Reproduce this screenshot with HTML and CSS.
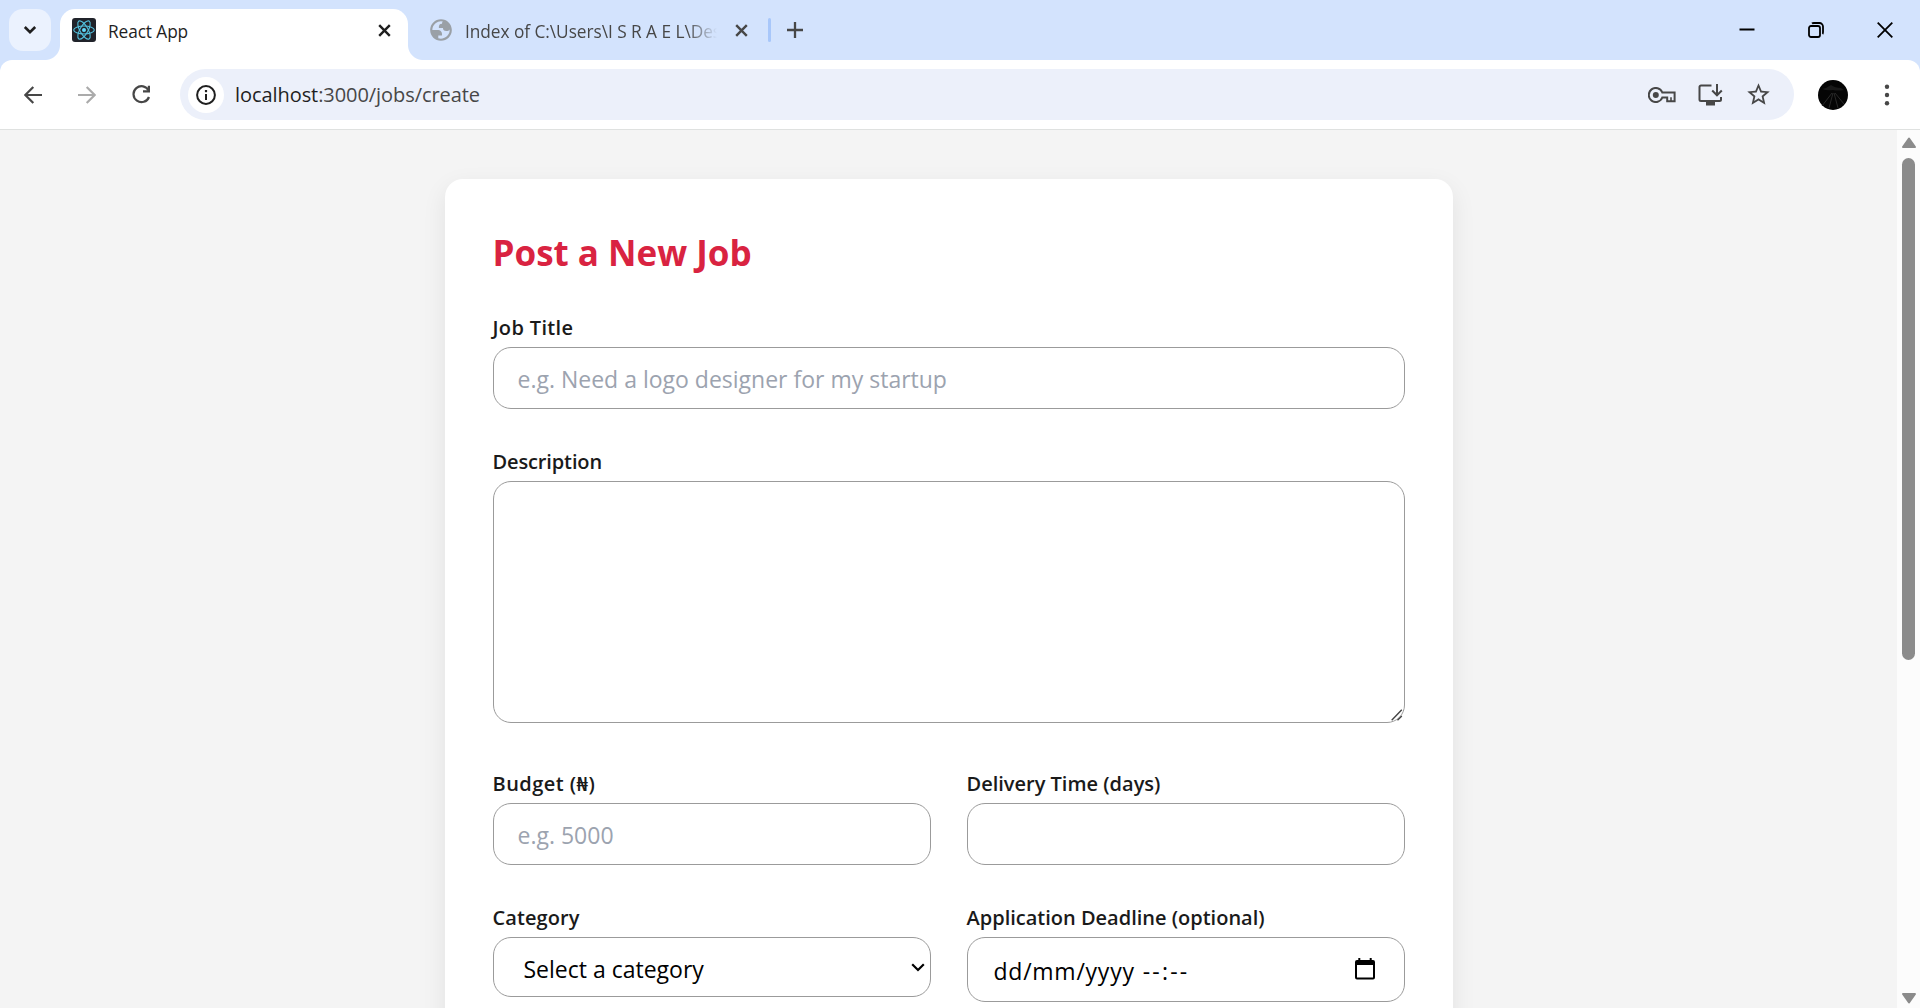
FILE: index.html
```html
<!DOCTYPE html>
<html lang="en">
<head>
<meta charset="utf-8">
<title>React App</title>
<link rel="stylesheet" href="styles.css">
</head>
<body>
<div class="browser">
  <header class="tabstrip">
    <button class="tab-search" aria-label="Search tabs">
      <svg width="14" height="10" viewBox="0 0 14 10"><path d="M1.8 2 7 7.200l5.200-5.200" fill="none" stroke="#1f1f1f" stroke-width="2.600"/></svg>
    </button>
    <div class="tab tab-active">
      <svg class="favicon" width="24" height="24" viewBox="0 0 24 24">
        <rect width="24" height="24" rx="3" fill="#20232a"/>
        <g fill="none" stroke="#53c1de" stroke-width="1.100">
          <ellipse cx="12" cy="12" rx="10.300" ry="4"/>
          <ellipse cx="12" cy="12" rx="10.300" ry="4" transform="rotate(60 12 12)"/>
          <ellipse cx="12" cy="12" rx="10.300" ry="4" transform="rotate(120 12 12)"/>
        </g>
        <circle cx="12" cy="12" r="2" fill="#61dafb"/>
      </svg>
      <span class="tab-title"><span class="t title-react">React App</span></span>
      <svg class="tab-close" width="13" height="13" viewBox="0 0 13 13"><path d="M1.200 1.200l10.600 10.600M11.800 1.200 1.200 11.800" stroke="#1f1f1f" stroke-width="2.400"/></svg>
    </div>
    <div class="tab tab-idle">
      <svg class="globe" width="26" height="26" viewBox="0 0 24 24"><path fill="#9aa0a6" fill-rule="evenodd" d="M12 2C6.480 2 2 6.480 2 12s4.480 10 10 10 10-4.480 10-10S17.520 2 12 2zM4 12h4.400c3.407.022 4.922 1.730 4.543 5.127H9.488v2.470a8.004 8.004 0 0 0 10.498-8.083C19.327 12.504 18.332 13 17 13c-2.137 0-3.206-.916-3.206-2.750h-3.748c-.274-2.728.683-4.092 2.870-4.092 0-.975.327-1.597.811-1.970A8.004 8.004 0 0 0 4 12z"/></svg>
      <span class="tab-title faded"><span class="t title-index">Index of C:\Users\I S R A E L\Des</span></span>
      <svg class="tab-close" width="13" height="13" viewBox="0 0 13 13"><path d="M1.200 1.200l10.600 10.600M11.800 1.200 1.200 11.800" stroke="#474747" stroke-width="2.400"/></svg>
    </div>
    <span class="tab-divider"></span>
    <svg class="new-tab" width="16" height="16" viewBox="0 0 16 16"><path d="M8 0v16M0 8h16" stroke="#474747" stroke-width="2.300"/></svg>
    <div class="window-controls">
      <svg width="16" height="16" viewBox="0 0 16 16"><path d="M.5 7.500h15" stroke="#000" stroke-width="2"/></svg>
      <svg width="16" height="16" viewBox="0 0 16 16"><g fill="none" stroke="#000" stroke-width="1.800"><rect x="1" y="4" width="11" height="11" rx="2"/><path d="M4 1.500Q4.500 1 6 1h5.500A3.500 3.500 0 0 1 15 4.500V10q0 1.500-.5 2"/></g></svg>
      <svg width="16" height="16" viewBox="0 0 16 16"><path d="M.7.7l14.600 14.600M15.300.7.7 15.300" stroke="#000" stroke-width="1.800"/></svg>
    </div>
  </header>

  <div class="toolbar">
    <svg class="nav-back" width="18" height="18" viewBox="0 0 18 18"><path d="M18 9H1.800M9.300.9 1.300 9l8 8.100" fill="none" stroke="#474747" stroke-width="2.200"/></svg>
    <svg class="nav-forward" width="18" height="18" viewBox="0 0 18 18"><path d="M0 9h16.200M8.700.9l8 8.100-8 8.100" fill="none" stroke="#ababab" stroke-width="2.200"/></svg>
    <svg class="nav-reload" width="19" height="19" viewBox="0 0 19 19"><path d="M16.700 5.600A8 8 0 1 0 17 12" fill="none" stroke="#474747" stroke-width="2.200"/><path d="M18 .8v6.700h-7V5.300h4.800V.8z" fill="#474747"/></svg>
    <div class="omnibox">
      <span class="site-info">
        <svg width="20" height="20" viewBox="0 0 20 20"><circle cx="10" cy="10" r="8.900" fill="none" stroke="#1f1f1f" stroke-width="2"/><path d="M10 9v6" stroke="#1f1f1f" stroke-width="2"/><path d="M10 5v2.200" stroke="#1f1f1f" stroke-width="2.200"/></svg>
      </span>
      <span class="url t"><b>localhost</b>:3000/jobs/create</span>
      <svg class="key" width="28" height="16" viewBox="0 0 28 16"><g fill="none" stroke="#474747" stroke-width="2"><path d="M14.300 5.500A7 7 0 1 0 14.300 10.500H19.200V14.200H26.600V5.500z"/><path d="M23 14V10.300" stroke-width="1.600"/></g><circle cx="7.800" cy="8" r="3" fill="#474747"/></svg>
      <svg class="install" width="25" height="22" viewBox="0 0 25 22"><path d="M13.500 1.600H3A1.500 1.500 0 0 0 1.500 3.100V15.500A1.500 1.500 0 0 0 3 17H21.500A1.500 1.500 0 0 0 23 15.500V13M19 0V11M14.200 6.500 19 11.300 23.800 6.500" fill="none" stroke="#474747" stroke-width="2"/><path d="M8 17h9v4.500H8z" fill="#474747"/></svg>
      <svg class="star" width="27" height="27" viewBox="0 0 24 24"><path fill="#474747" d="M22 9.240l-7.190-.62L12 2 9.190 8.630 2 9.240l5.460 4.730L5.820 21 12 17.270 18.180 21l-1.630-7.030L22 9.240zM12 15.400l-3.760 2.270 1-4.280-3.320-2.880 4.380-.38L12 6.100l1.710 4.040 4.380.38-3.320 2.880 1 4.280L12 15.400z"/></svg>
    </div>
    <svg class="avatar" width="30" height="30" viewBox="0 0 30 30">
      <circle cx="15" cy="15" r="15" fill="#050505"/>
      <path d="M4 9q5-1 9-4 4 3 10 3l3 2q-6 1-11 0-6 1-11-1z" fill="#191919"/>
      <path d="M14 13 4 26M15 13l-4 15M16 13l4 15M17 13l9 11" stroke="#292929" fill="none"/>
    </svg>
    <svg class="menu-dots" width="6" height="22" viewBox="0 0 6 22" fill="#474747"><circle cx="3" cy="2.700" r="2.200"/><circle cx="3" cy="11" r="2.200"/><circle cx="3" cy="19.300" r="2.200"/></svg>
  </div>

  <div class="viewport">
    <main class="page">
      <form class="card">
        <h1><span class="t">Post a New Job</span></h1>
        <div class="field">
          <label for="title"><span class="t l-title">Job Title</span></label>
          <input id="title" class="control" type="text" placeholder="e.g. Need a logo designer for my startup">
        </div>
        <div class="field field-area">
          <label for="description"><span class="t l-description">Description</span></label>
          <textarea id="description" class="control area"></textarea>
          <svg class="grip" width="12" height="12" viewBox="0 0 12 12"><path d="M.7 11.300 10.800.8M6.500 11.300 10.800 7" stroke="#444" stroke-width="1.400"/></svg>
        </div>
        <div class="grid">
          <div class="field">
            <label for="budget"><span class="t l-budget">Budget (₦)</span></label>
            <input id="budget" class="control" type="text" placeholder="e.g. 5000">
          </div>
          <div class="field">
            <label for="delivery"><span class="t l-delivery">Delivery Time (days)</span></label>
            <input id="delivery" class="control" type="text">
          </div>
          <div class="field">
            <label><span class="t l-category">Category</span></label>
            <div class="control select">
              <span class="t select-value">Select a category</span>
              <svg width="14" height="9" viewBox="0 0 14 9"><path d="M1.200 1.300 7 7l5.800-5.700" fill="none" stroke="#000" stroke-width="2.200"/></svg>
            </div>
          </div>
          <div class="field">
            <label><span class="t l-deadline">Application Deadline (optional)</span></label>
            <div class="control date">
              <span class="t date-value">dd/mm/yyyy</span>
              <span class="t time-value">--:--</span>
              <svg width="20" height="22" viewBox="0 0 20 22"><path d="M3.300 0h2v2h9.400V0h2v2H18a2 2 0 0 1 2 2v15.500a2 2 0 0 1-2 2H2a2 2 0 0 1-2-2V4a2 2 0 0 1 2-2h1.300zM2 7v12.500h16V7z" fill="#000" fill-rule="evenodd"/></svg>
            </div>
          </div>
        </div>
      </form>
    </main>
    <div class="scrollbar">
      <svg width="16" height="12" viewBox="0 0 16 12"><path d="M8 1.500 14 10H2z" fill="#8b8b8b" stroke="#8b8b8b" stroke-width="2" stroke-linejoin="round"/></svg>
      <span class="thumb"></span>
      <svg width="16" height="12" viewBox="0 0 16 12"><path d="M8 10.500 14 2H2z" fill="#8b8b8b" stroke="#8b8b8b" stroke-width="2" stroke-linejoin="round"/></svg>
    </div>
  </div>
</div>
</body>
</html>
```
FILE: styles.css
```css
* { box-sizing: border-box; }
body {
  margin: 0;
  font-family: "Open Sans", "Noto Sans", sans-serif;
  overflow: hidden;
}
svg { display: block; flex: none; }
.t { white-space: pre; }

.browser {
  display: flex;
  flex-direction: column;
  width: 100%;
  height: 1008px;
  background: #d3e3fd;
}

.tabstrip {
  display: flex;
  align-items: center;
  height: 60px;
  padding-left: 9px;
}
.tab-search {
  display: flex;
  align-items: center;
  justify-content: center;
  width: 42px;
  height: 42px;
  padding: 0;
  border: 0;
  border-radius: 14px;
  background: #ebf2fe;
}
.tab {
  display: flex;
  align-items: center;
  font-size: 17.300px;
  color: #474747;
}
.tab-title { flex: 1; line-height: 24px; overflow: hidden; }
.tab-active {
  position: relative;
  align-self: flex-end;
  width: 348px;
  height: 51px;
  margin-left: 9px;
  padding: 0 18px 9px 12px;
  border-radius: 15px 15px 0 0;
  background: #fff;
  color: #1f1f1f;
}
.tab-active::before,
.tab-active::after {
  content: "";
  position: absolute;
  bottom: 0;
  width: 15px;
  height: 15px;
}
.tab-active::before {
  right: 100%;
  background: radial-gradient(circle at 0 0, transparent 14.500px, #fff 15.500px);
}
.tab-active::after {
  left: 100%;
  background: radial-gradient(circle at 100% 0, transparent 14.500px, #fff 15.500px);
}
.tab-active .tab-title { padding: 4px 0 0 12px; }
.tab-active .tab-close { margin-right: -1px; }
.title-react { letter-spacing: -.1px; }
.tab-idle { width: 339px; padding-left: 20px; }
.tab-idle .tab-title { flex: none; width: 252px; margin-left: 11px; padding-top: 4px; white-space: nowrap; }
.tab-idle .tab-close { margin-left: 18px; }
.title-index { letter-spacing: -.05px; }
.faded { mask-image: linear-gradient(90deg, #000 88%, transparent 100%); }
.tab-divider { width: 3px; height: 24px; margin-left: 21px; border-radius: 2px; background: #a8c7fa; }
.new-tab { margin-left: 16px; }
.window-controls {
  display: flex;
  gap: 53px;
  margin-left: auto;
  padding-right: 27px;
}

.toolbar {
  display: flex;
  align-items: center;
  height: 70px;
  padding: 0 30px 0 24px;
  border-bottom: 1px solid #dfe1e0;
  border-radius: 12px 12px 0 0;
  background: #fff;
}
.nav-forward { margin-left: 36px; }
.nav-reload { margin-left: 36px; }
.omnibox {
  display: flex;
  align-items: center;
  width: 1614px;
  height: 51px;
  margin-left: 29px;
  border-radius: 26px;
  background: #ecf0fa;
}
.site-info {
  display: flex;
  align-items: center;
  justify-content: center;
  width: 36px;
  height: 36px;
  margin-left: 8px;
  border-radius: 50%;
  background: #fff;
}
.url { margin-left: 11px; font-size: 20px; letter-spacing: -.07px; color: #474747; }
.url b { font-weight: 400; color: #1f1f1f; }
.key { margin-left: auto; }
.install { margin-left: 22px; }
.star { margin: 0 22px; }
.avatar { margin-left: 24px; }
.menu-dots { margin-left: auto; }

.viewport {
  display: flex;
  height: 878px;
  overflow: hidden;
  background: #f4f4f4;
}
.page {
  flex: 1;
  padding-top: 49px;
}
.card {
  width: 1008px;
  height: 1250px;
  margin: 0 auto;
  padding: 48px;
  border-radius: 18px;
  background: #fff;
  box-shadow: 0 8px 24px rgba(0, 0, 0, .08);
}
h1 {
  height: 48px;
  margin: 0 0 36px;
  font-size: 35px;
  line-height: 52px;
  font-weight: 700;
  color: #d92341;
}
.field { margin-bottom: 36px; }
label {
  display: block;
  height: 36px;
  font-size: 20px;
  line-height: 34px;
  font-weight: 600;
  color: #1a1a1a;
}
.l-title { letter-spacing: .35px; }
.l-description { letter-spacing: -.13px; }
.l-budget { letter-spacing: .45px; }
.l-category { letter-spacing: .1px; }
.control {
  display: flex;
  align-items: center;
  width: 100%;
  height: 62px;
  padding: 2px 24px 0;
  border: 1px solid #9b9b9b;
  border-radius: 18px;
  background: #fff;
  font-family: inherit;
  font-size: 23px;
  color: #000;
  outline: 0;
}
.control::placeholder { color: #9ca3af; opacity: 1; }
.field-area { position: relative; margin-bottom: 44px; }
.area { height: 242px; resize: none; }
.grip { position: absolute; right: 2px; bottom: 2px; }
.grid {
  display: grid;
  grid-template-columns: 1fr 1fr;
  column-gap: 36px;
}
.select { height: 60px; padding: 0 5px 0 30px; justify-content: space-between; }
.select-value { padding-top: 3px; }
.date { height: 65px; padding: 2px 29px 0 26px; }
.date-value { letter-spacing: .75px; }
.time-value { margin-left: 8px; letter-spacing: 2.200px; }
.date svg { margin: -3px 0 0 auto; }

.scrollbar {
  display: flex;
  flex-direction: column;
  align-items: center;
  width: 23px;
  padding: 7px 0 4px;
  background: #fcfcfc;
}
.thumb {
  width: 13px;
  height: 502px;
  margin: 9px 0 auto;
  border-radius: 7px;
  background: #8b8b8b;
}
```
